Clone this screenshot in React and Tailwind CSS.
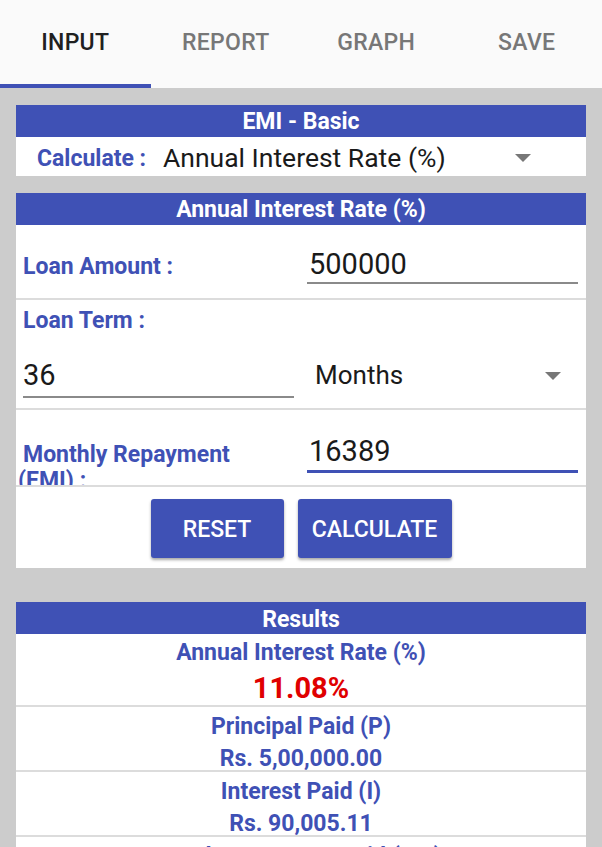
import React from "react";

const Tri = ({ className = "" }) => (
  <svg width="16" height="8" viewBox="0 0 16 8" className={className}>
    <path d="M0 0 L16 0 L8 8 Z" fill="#777" />
  </svg>
);

export default function App() {
  const font = { fontFamily: "Roboto, 'Noto Sans', sans-serif" };
  return (
    <div style={font} className="w-[602px] h-[847px] overflow-hidden bg-[#cccccc]">
      {/* Tabs */}
      <div className="bg-[#fafafa] h-[88px] flex">
        {["INPUT", "REPORT", "GRAPH", "SAVE"].map((t, i) => (
          <div key={t} className="flex-1 relative flex items-center justify-center">
            <span className={`text-[23px] font-medium tracking-[0.3px] pb-[1px] ${i === 0 ? "text-[#202020]" : "text-[#777777]"}`}>{t}</span>
            {i === 0 && <div className="absolute left-0 right-0 bottom-0 h-[4px] bg-[#3f51b5]" />}
          </div>
        ))}
      </div>

      <div className="px-[16px] pt-[17px]">
        {/* Card 1 */}
        <div className="bg-white w-[570px]">
          <div className="h-[32px] bg-[#3f51b5] text-white font-bold text-[23px] flex items-center justify-center pt-[3px]">EMI - Basic</div>
          <div className="h-[39px] flex items-center pl-[21px] pt-[2px]">
            <span className="text-[#3f51b5] font-bold text-[23px] w-[126px] pt-[3px]">Calculate :</span>
            <span className="text-[#1a1a1a] text-[26.5px] flex-1">Annual Interest Rate (%)</span>
            <Tri className="mr-[55px]" />
          </div>
        </div>

        {/* Card 2 */}
        <div className="bg-white w-[570px] mt-[17px]">
          <div className="h-[32px] bg-[#3f51b5] text-white font-bold text-[23px] flex items-center justify-center pt-[3px]">Annual Interest Rate (%)</div>
          <div className="h-[75px] flex items-center border-b-2 border-[#dcdcdc]">
            <span className="text-[#3f51b5] font-bold text-[23px] pl-[7px] w-[291px] pt-[12px]">Loan Amount :</span>
            <div className="w-[271px] border-b-2 border-[#8a8a8a] h-[42px] flex items-end pb-[3px] mt-[2px]">
              <span className="text-[29px] text-[#1a1a1a] leading-none pl-[2px]">500000</span>
            </div>
          </div>
          <div className="h-[110px] border-b-2 border-[#dcdcdc] pl-[7px] pt-[7px]">
            <div className="text-[#3f51b5] font-bold text-[23px] leading-[28px]">Loan Term :</div>
            <div className="flex items-center mt-[19px]">
              <div className="w-[271px] border-b-2 border-[#8a8a8a] h-[44px] flex items-end pb-[6px]">
                <span className="text-[29px] text-[#1a1a1a] leading-none">36</span>
              </div>
              <span className="text-[26px] text-[#1a1a1a] ml-[21px] flex-1 pb-[2px]">Months</span>
              <Tri className="mr-[25px]" />
            </div>
          </div>
          <div className="h-[77px] flex border-b-2 border-[#dcdcdc] overflow-hidden">
            <div className="w-[291px] pl-[7px] pt-[32px] text-[#3f51b5] font-bold text-[23px] leading-[26px] whitespace-nowrap">
              Monthly Repayment<br /><span className="-ml-[5px]">(EMI) :</span>
            </div>
            <div className="w-[271px] border-b-[3px] border-[#3f51b5] h-[63px] flex items-end pb-[4px]">
              <span className="text-[29px] text-[#1a1a1a] leading-none pl-[2px]">16389</span>
            </div>
          </div>
          <div className="h-[81px] flex items-center justify-center gap-[14px] pt-[2px]">
            <button className="w-[133px] h-[59px] bg-[#3f51b5] text-white text-[23px] font-medium rounded-[3px] shadow-[0_2px_3px_rgba(0,0,0,0.35)] pt-[4px]">RESET</button>
            <button className="w-[154px] h-[59px] bg-[#3f51b5] text-white text-[23px] font-medium rounded-[3px] shadow-[0_2px_3px_rgba(0,0,0,0.35)] pt-[4px]">CALCULATE</button>
          </div>
        </div>

        {/* Results */}
        <div className="bg-white w-[570px] mt-[34px]">
          <div className="h-[32px] bg-[#3f51b5] text-white font-bold text-[23px] flex items-center justify-center pt-[4px]">Results</div>
          <div className="h-[73px] border-b-2 border-[#dcdcdc] flex flex-col items-center">
            <div className="text-[#3f51b5] font-bold text-[23px] leading-[28px] mt-[5px]">Annual Interest Rate (%)</div>
            <div className="text-[#e00000] font-bold text-[29px] leading-[32px] mt-[5px]">11.08%</div>
          </div>
          <div className="h-[65px] border-b-2 border-[#dcdcdc] flex flex-col items-center">
            <div className="text-[#3f51b5] font-bold text-[23px] leading-[28px] mt-[6px]">Principal Paid (P)</div>
            <div className="text-[#3f51b5] font-bold text-[23px] leading-[28px] mt-[4px]">Rs. 5,00,000.00</div>
          </div>
          <div className="h-[65px] border-b-2 border-[#dcdcdc] flex flex-col items-center">
            <div className="text-[#3f51b5] font-bold text-[23px] leading-[28px] mt-[6px]">Interest Paid (I)</div>
            <div className="text-[#3f51b5] font-bold text-[23px] leading-[28px] mt-[4px]">Rs. 90,005.11</div>
          </div>
          <div className="h-[65px] flex flex-col items-center">
            <div className="text-[#3f51b5] font-bold text-[23px] leading-[28px] mt-[6px]">Total Repayment Paid (P+I)</div>
            <div className="text-[#3f51b5] font-bold text-[23px] leading-[28px] mt-[4px]">Rs. 5,90,005.11</div>
          </div>
        </div>
      </div>
    </div>
  );
}
